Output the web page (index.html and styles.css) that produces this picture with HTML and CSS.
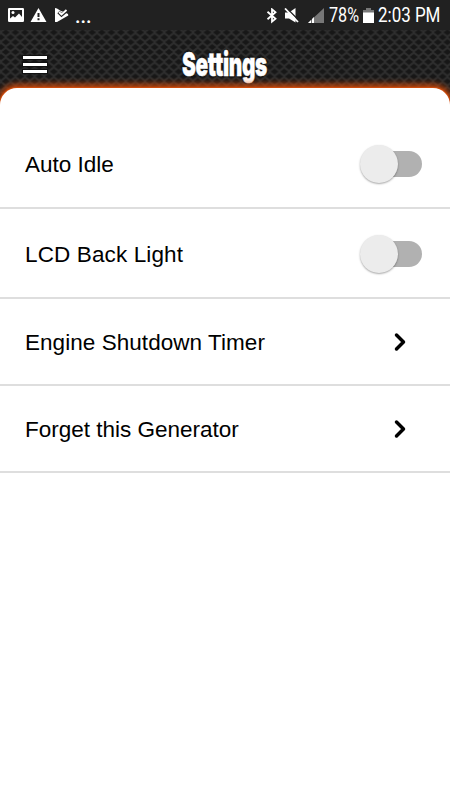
FILE: index.html
```
<!DOCTYPE html>
<html lang="en">
<head>
<meta charset="UTF-8">
<meta name="viewport" content="width=device-width, initial-scale=1.0">
<title>Settings</title>
<link rel="stylesheet" href="styles.css">
</head>
<body>
<div class="statusbar">
  <div class="notifications">
    <svg class="icon-image" width="16" height="16" viewBox="0 0 16 16">
      <path fill="#fff" fill-rule="evenodd" d="M1.200 0h13.600q1.200 0 1.200 1.200v11.600q0 1.200-1.200 1.200H1.200Q0 14 0 12.800V1.200Q0 0 1.200 0zM2 2v8.500l3-2.500 2 1.500 4-4 3 3.500V2z"/>
      <circle cx="5" cy="4.500" r="1.500" fill="#fff"/>
    </svg>
    <svg class="icon-warning" width="17" height="16" viewBox="0 0 17 16">
      <path fill="#fff" fill-rule="evenodd" d="M8.500 0L16.500 14H.5zM7.500 5v4h2V5zM7.500 10.300v2h2v-2z"/>
    </svg>
    <svg class="icon-play" width="14" height="16" viewBox="0 0 14 16">
      <path fill="#fff" d="M0 0L2 .5 6 3l3 1 4 2 .3 1.500L2 14 0 14z"/>
      <path fill="none" stroke="#212121" stroke-width="3.200" d="M3.500 4l3 3 6-5"/>
      <path fill="none" stroke="#fff" stroke-width="1.800" d="M4 4l2.500 2.500L11.500 2"/>
    </svg>
    <span class="dots">...</span>
  </div>
  <div class="system">
    <svg class="icon-bluetooth" width="12" height="16" viewBox="0 0 12 16">
      <path fill="none" stroke="#fff" stroke-width="1.800" d="M1.500 3.800l8 7L6 13.700V1.300l3.500 2.900-8 7"/>
    </svg>
    <svg class="icon-mute" width="16" height="16" viewBox="0 0 16 16">
      <path fill="#fff" d="M1 4.500h4L11.500 0v14.500L5 10.500H1z"/>
      <path stroke="#212121" stroke-width="1.400" d="M3 .5l13 13"/>
      <path stroke="#fff" stroke-width="1.800" d="M1 .5l13 13.500"/>
    </svg>
    <svg class="icon-signal" width="16" height="16" viewBox="0 0 16 16">
      <path fill="#777" d="M16 0v15H0z"/>
      <path fill="#fff" d="M0 15l3-3v3zM4 15v-4l2-2v6z"/>
    </svg>
    <span class="percent">78%</span>
    <svg class="icon-battery" width="11" height="16" viewBox="0 0 11 16">
      <path fill="#777" d="M3 0h5v2h3v3H0V2h3z"/>
      <path fill="#fff" d="M0 4.500h11V15H0z"/>
    </svg>
    <span class="clock">2:03 PM</span>
  </div>
</div>

<header class="header">
  <svg class="mesh" width="450" height="72">
    <defs>
      <pattern id="mesh" width="9.600" height="9.800" patternUnits="userSpaceOnUse" x="1" y="-2.500">
        <rect width="9.600" height="9.800" fill="#2e2e2e"/>
        <path fill="#171717" d="M4.800 1.900L8.800 4.900 4.800 7.900.8 4.900zM0-3L4 0 0 3-4 0zM9.600-3l4 3-4 3-4-3zM0 6.800l4 3-4 3-4-3zM9.600 6.800l4 3-4 3-4-3z"/>
      </pattern>
    </defs>
    <rect width="450" height="72" fill="url(#mesh)"/>
  </svg>
  <button class="menu" aria-label="Menu"><i></i><i></i><i></i></button>
  <h1 class="title"><span>Settings</span></h1>
</header>

<main class="panel">
  <div class="row row-switch">
    <span class="label">Auto Idle</span>
    <div class="switch"><div class="knob"></div></div>
  </div>
  <div class="row row-switch">
    <span class="label label-lcd">LCD Back Light</span>
    <div class="switch"><div class="knob"></div></div>
  </div>
  <div class="row">
    <span class="label label-timer">Engine Shutdown Timer</span>
    <svg class="chevron" width="14" height="22" viewBox="0 0 14 22"><path d="M3.500 4l7 7-7 7"/></svg>
  </div>
  <div class="row">
    <span class="label">Forget this Generator</span>
    <svg class="chevron" width="14" height="22" viewBox="0 0 14 22"><path d="M3.500 4l7 7-7 7"/></svg>
  </div>
</main>
</body>
</html>
```
FILE: styles.css
```
* {
  box-sizing: border-box;
}
body {
  margin: 0;
  height: 800px;
  overflow: hidden;
  background: #fff;
  color: #000;
  font-family: "Liberation Sans", Arial, sans-serif;
}
.statusbar {
  display: flex;
  justify-content: space-between;
  height: 30px;
  padding: 1px 10px 0 8px;
  background: #212121;
  color: #fff;
  font-family: Roboto, sans-serif;
}
.notifications, .system {
  display: flex;
  align-items: center;
}
.icon-warning {
  margin-left: 6px;
}
.icon-play {
  margin-left: 8px;
}
.dots {
  margin-left: 6px;
  font-size: 20px;
  font-weight: 500;
}
.icon-mute {
  margin-left: 6px;
}
.icon-signal {
  margin-left: 8px;
}
.percent, .clock {
  font-size: 19.5px;
  line-height: 30px;
  transform-origin: left;
  white-space: nowrap;
}
.percent {
  width: 30px;
  margin-left: 5px;
  transform: scaleX(0.83);
}
.icon-battery {
  margin-left: 4px;
}
.clock {
  width: 62px;
  margin-left: 4px;
  transform: scaleX(0.87);
}
.header {
  position: relative;
  display: flex;
  height: 72px;
  background: #262626;
}
.mesh {
  position: absolute;
  left: 0;
  top: 0;
}
.menu {
  position: relative;
  display: flex;
  flex-direction: column;
  gap: 4px;
  width: 24px;
  height: 17px;
  margin: 26px 0 0 23px;
  padding: 0;
  border: 0;
  background: none;
}
.menu i {
  width: 24px;
  height: 3px;
  background: #fff;
  box-shadow: 0 0 1px 1px #111;
}
.title {
  position: relative;
  width: 86px;
  margin: 16px 0 0 135px;
  color: #fff;
  font: 900 33px/36px Inter, sans-serif;
  letter-spacing: -0.5px;
  text-shadow: 0 0 2px #000, 0 0 2px #000;
}
.title span {
  display: block;
  transform: scaleX(0.63);
  transform-origin: left;
  -webkit-text-stroke: 0.5px #fff;
}
.panel {
  position: relative;
  height: 713px;
  margin-top: -14px;
  padding-top: 31px;
  border-radius: 17px 17px 0 0;
  background: #fff;
  box-shadow: 0 0 1px 1px #d04c0c, 0 -1px 6px 3px rgba(206, 74, 12, 0.95);
}
.row {
  display: flex;
  align-items: center;
  justify-content: space-between;
  height: 87px;
  padding: 0 43px 0 25px;
  border-bottom: 2px solid #dedede;
}
.row-switch {
  height: 90px;
  padding: 2px 28px 0 25px;
}
.label {
  padding-top: 2px;
  font-size: 22.5px;
  white-space: nowrap;
}
.label-lcd {
  letter-spacing: 0.13px;
}
.label-timer {
  letter-spacing: 0.05px;
}
.switch {
  display: flex;
  align-items: center;
  width: 58px;
  height: 26px;
  border-radius: 13px;
  background: #b1b1b1;
}
.knob {
  width: 38px;
  height: 38px;
  margin-left: -4px;
  border-radius: 50%;
  background: #ececec;
  box-shadow: 0 1px 2px rgba(0, 0, 0, 0.35);
}
.chevron path {
  fill: none;
  stroke: #000;
  stroke-width: 3.5;
  stroke-linecap: round;
  stroke-linejoin: round;
}
```
